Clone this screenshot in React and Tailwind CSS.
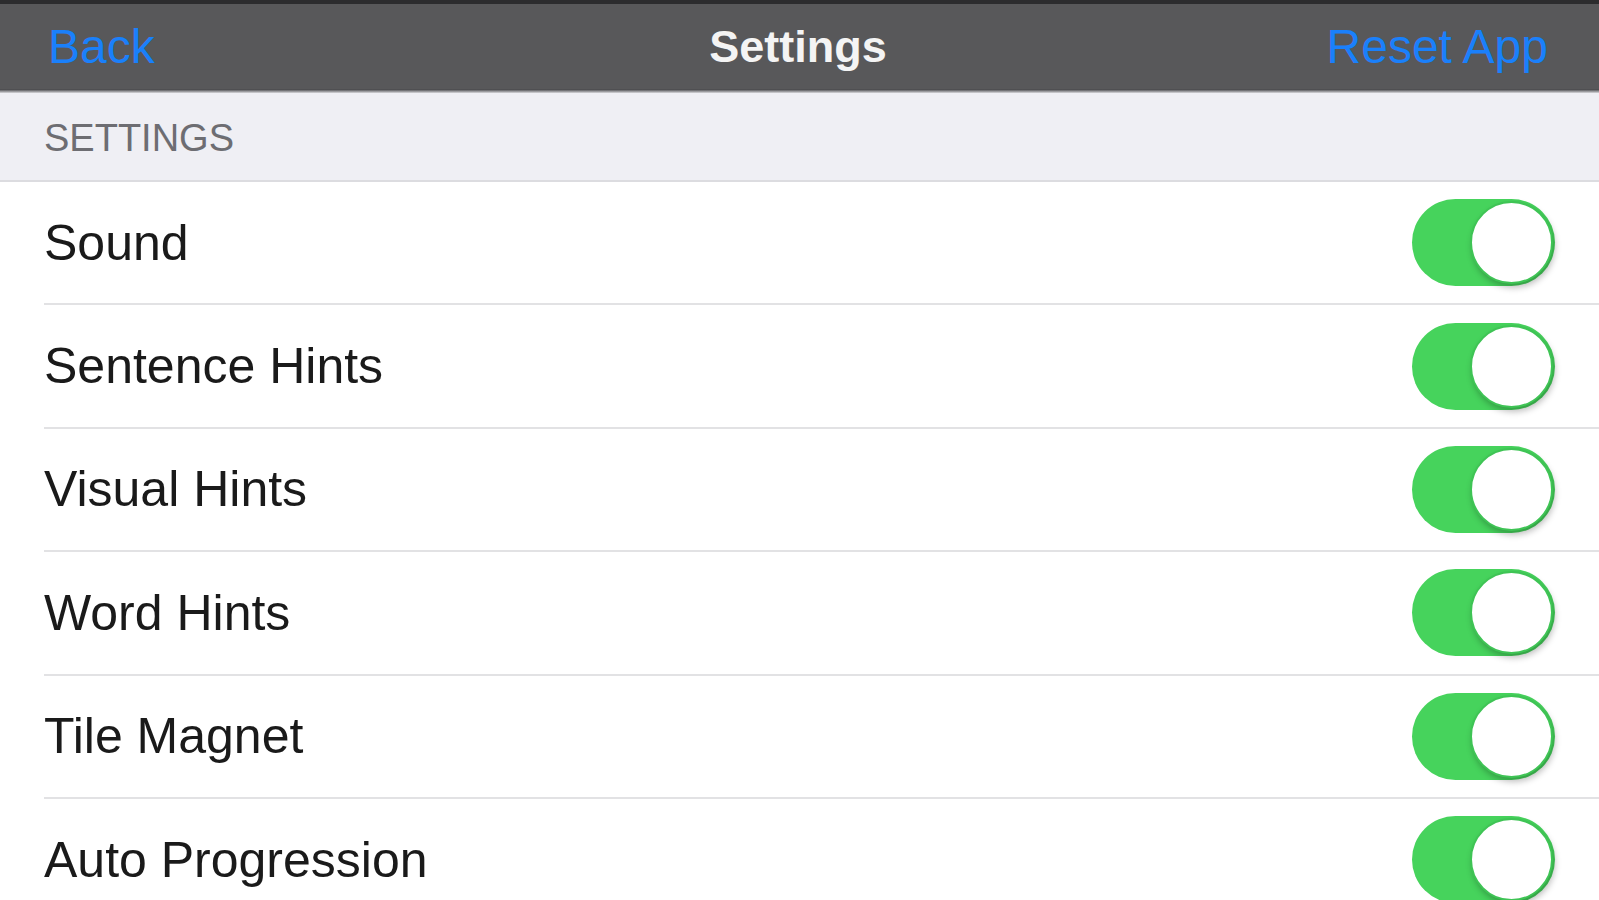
const rows = [
  'Sound',
  'Sentence Hints',
  'Visual Hints',
  'Word Hints',
  'Tile Magnet',
  'Auto Progression',
];

function Toggle() {
  return (
    <div className="flex h-[87px] w-[143px] shrink-0 items-center justify-end rounded-full bg-[#46d35c] p-[2px]">
      <div className="h-[83px] w-[83px] rounded-full border-2 border-[#3fc455] bg-white shadow-[2px_4px_6px_rgba(0,0,0,0.25)]" />
    </div>
  );
}

export default function App() {
  return (
    <div className="h-[900px] w-full overflow-hidden bg-white font-['Liberation_Sans',Arial,sans-serif]">
      <div className="h-[4px] bg-[#2c2c2e]" />
      <div className="flex h-[85px] items-center justify-between bg-[#58585a] pl-[48px] pr-[51px]">
        <span className="w-[300px] text-[48px] leading-none text-[#1a80fb]">Back</span>
        <span className="text-[45px] font-bold leading-none text-[#f4f4f4]">Settings</span>
        <span className="w-[300px] text-right text-[48px] leading-none text-[#1a80fb]">Reset App</span>
      </div>
      <div className="h-[4px] bg-gradient-to-b from-[#3e3e40] to-[#d8d8dc]" />
      <div className="flex h-[89px] items-center border-b-2 border-[#dcdce0] bg-[#efeff4] pl-[44px] pt-[2px]">
        <span className="text-[38px] leading-none text-[#6d6d72]">SETTINGS</span>
      </div>
      <div className="pl-[44px]">
        {rows.map((label) => (
          <div
            key={label}
            className="flex h-[123.4px] items-center justify-between border-b-2 border-[#e2e2e4] pr-[44px]"
          >
            <span className="text-[50px] leading-none text-[#1a1a1a]">{label}</span>
            <Toggle />
          </div>
        ))}
      </div>
    </div>
  );
}
